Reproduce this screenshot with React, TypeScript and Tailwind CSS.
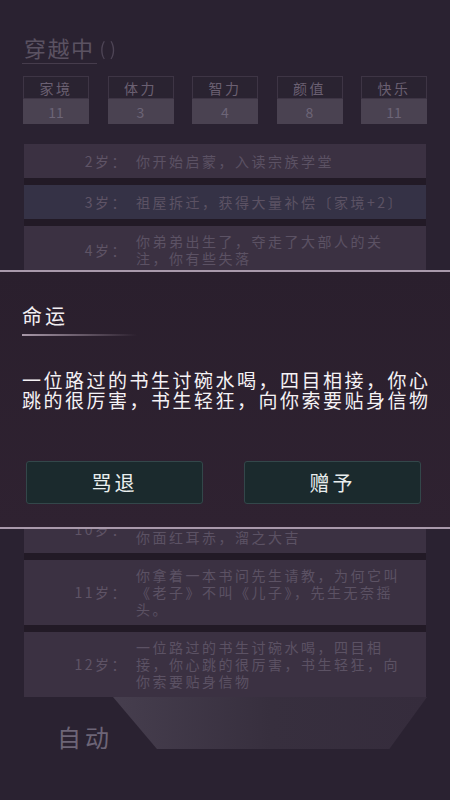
import React from 'react';

interface Stat {
  name: string;
  value: number;
}

interface LifeEvent {
  age: number;
  text: string;
  blue?: boolean;
}

const stats: Stat[] = [
  { name: '家境', value: 11 },
  { name: '体力', value: 3 },
  { name: '智力', value: 4 },
  { name: '颜值', value: 8 },
  { name: '快乐', value: 11 },
];

const earlyEvents: LifeEvent[] = [
  { age: 2, text: '你开始启蒙，入读宗族学堂' },
  { age: 3, text: '祖屋拆迁，获得大量补偿〔家境+2〕', blue: true },
  { age: 4, text: '你弟弟出生了，夺走了大部人的关注，你有些失落' },
];

const lateEvents: LifeEvent[] = [
  { age: 10, text: '邻家小妹说她长大后一定要嫁给你，你面红耳赤，溜之大吉' },
  { age: 11, text: '你拿着一本书问先生请教，为何它叫《老子》不叫《儿子》，先生无奈摇头。' },
  { age: 12, text: '一位路过的书生讨碗水喝，四目相接，你心跳的很厉害，书生轻狂，向你索要贴身信物' },
];

const StatBox = ({ stat }: { stat: Stat }) => (
  <div className="w-[66px] flex flex-col">
    <div className="h-[23px] border border-[#3e3545] bg-[#2a2331] flex items-center justify-center text-[14px] leading-none tracking-[2.5px] text-[#6b6072]">
      {stat.name}
    </div>
    <div className="h-[25px] bg-[#4a4251] flex items-center justify-center text-[14px] leading-none text-[#6d6577]">
      {stat.value}
    </div>
  </div>
);

const EventRow = ({ item }: { item: LifeEvent }) => (
  <div className={`flex items-center min-h-[34px] py-[7px] ${item.blue ? 'bg-[#353246]' : 'bg-[#3b3142]'}`}>
    <div className="w-[104px] shrink-0 text-right text-[14px] leading-[17px] tracking-[2.5px] text-[#5f5466]">
      {item.age}岁：
    </div>
    <div className="ml-[8px] w-[268px] text-[14px] leading-[17px] tracking-[2.5px] text-[#5c5264]">
      {item.text}
    </div>
  </div>
);

const FateDialog = () => (
  <div className="absolute inset-x-0 top-[270px] h-[259px] border-y-2 border-[#a999ab] bg-gradient-to-b from-[#2a1f2d] to-[#2f2231] px-[22px] pt-[34px]">
    <div className="text-[20px] leading-[20px] tracking-[3px] text-[#f2eef2]">命运</div>
    <div className="mt-[8px] h-[2px] w-[115px] bg-gradient-to-r from-[#a898a8] to-transparent" />
    <p className="mt-[34px] w-[412px] text-[19px] leading-[20px] tracking-[2.5px] text-[#f5f2f5]">
      一位路过的书生讨碗水喝，四目相接，你心跳的很厉害，书生轻狂，向你索要贴身信物
    </p>
    <div className="mt-[51px] ml-[4px] flex gap-[41px]">
      {['骂退', '赠予'].map((label) => (
        <button
          key={label}
          className="w-[177px] h-[43px] rounded-[3px] border border-[#33474a] bg-[#1b2a2d] text-[20px] leading-none tracking-[3px] text-[#e9eeee]"
        >
          {label}
        </button>
      ))}
    </div>
  </div>
);

export default function App() {
  return (
    <div className="relative w-[450px] h-[800px] overflow-hidden bg-[#2a2231] font-['Noto_Sans_CJK_SC','Liberation_Sans',sans-serif]">
      <div className="pt-[36px] px-[22px] flex items-end">
        <div className="pl-[2px] pr-[2px] pb-[5px] border-b border-[#463c4c] text-[22px] leading-[22px] tracking-[1.5px] text-[#5b5262]">
          穿越中
        </div>
        <div className="pb-[7px] ml-[3px] text-[18px] leading-[18px] text-[#4e4556] blur-[0.6px]">( )</div>
      </div>

      <div className="mt-[12px] px-[23px] flex justify-between">
        {stats.map((s) => (
          <StatBox key={s.name} stat={s} />
        ))}
      </div>

      <div className="mt-[20px] mx-[24px] flex flex-col gap-[7px] bg-[#221a26]">
        {earlyEvents.map((e) => (
          <EventRow key={e.age} item={e} />
        ))}
        {/* rows covered by the dialog */}
        <div className="h-[217px] bg-[#3b3142]" />
        {lateEvents.map((e) => (
          <EventRow key={e.age} item={e} />
        ))}
      </div>

      <div className="h-[52px] pl-[57px] pr-[23px] flex items-end">
        <div className="text-[24px] leading-[24px] tracking-[4px] text-[#6d6577]">自动</div>
        <div className="flex-1 self-stretch bg-gradient-to-r from-[#463e4e] via-[#372f3e] to-[#352c3c] [clip-path:polygon(0_0,100%_0,88%_100%,14%_100%)]" />
      </div>

      <FateDialog />
    </div>
  );
}
